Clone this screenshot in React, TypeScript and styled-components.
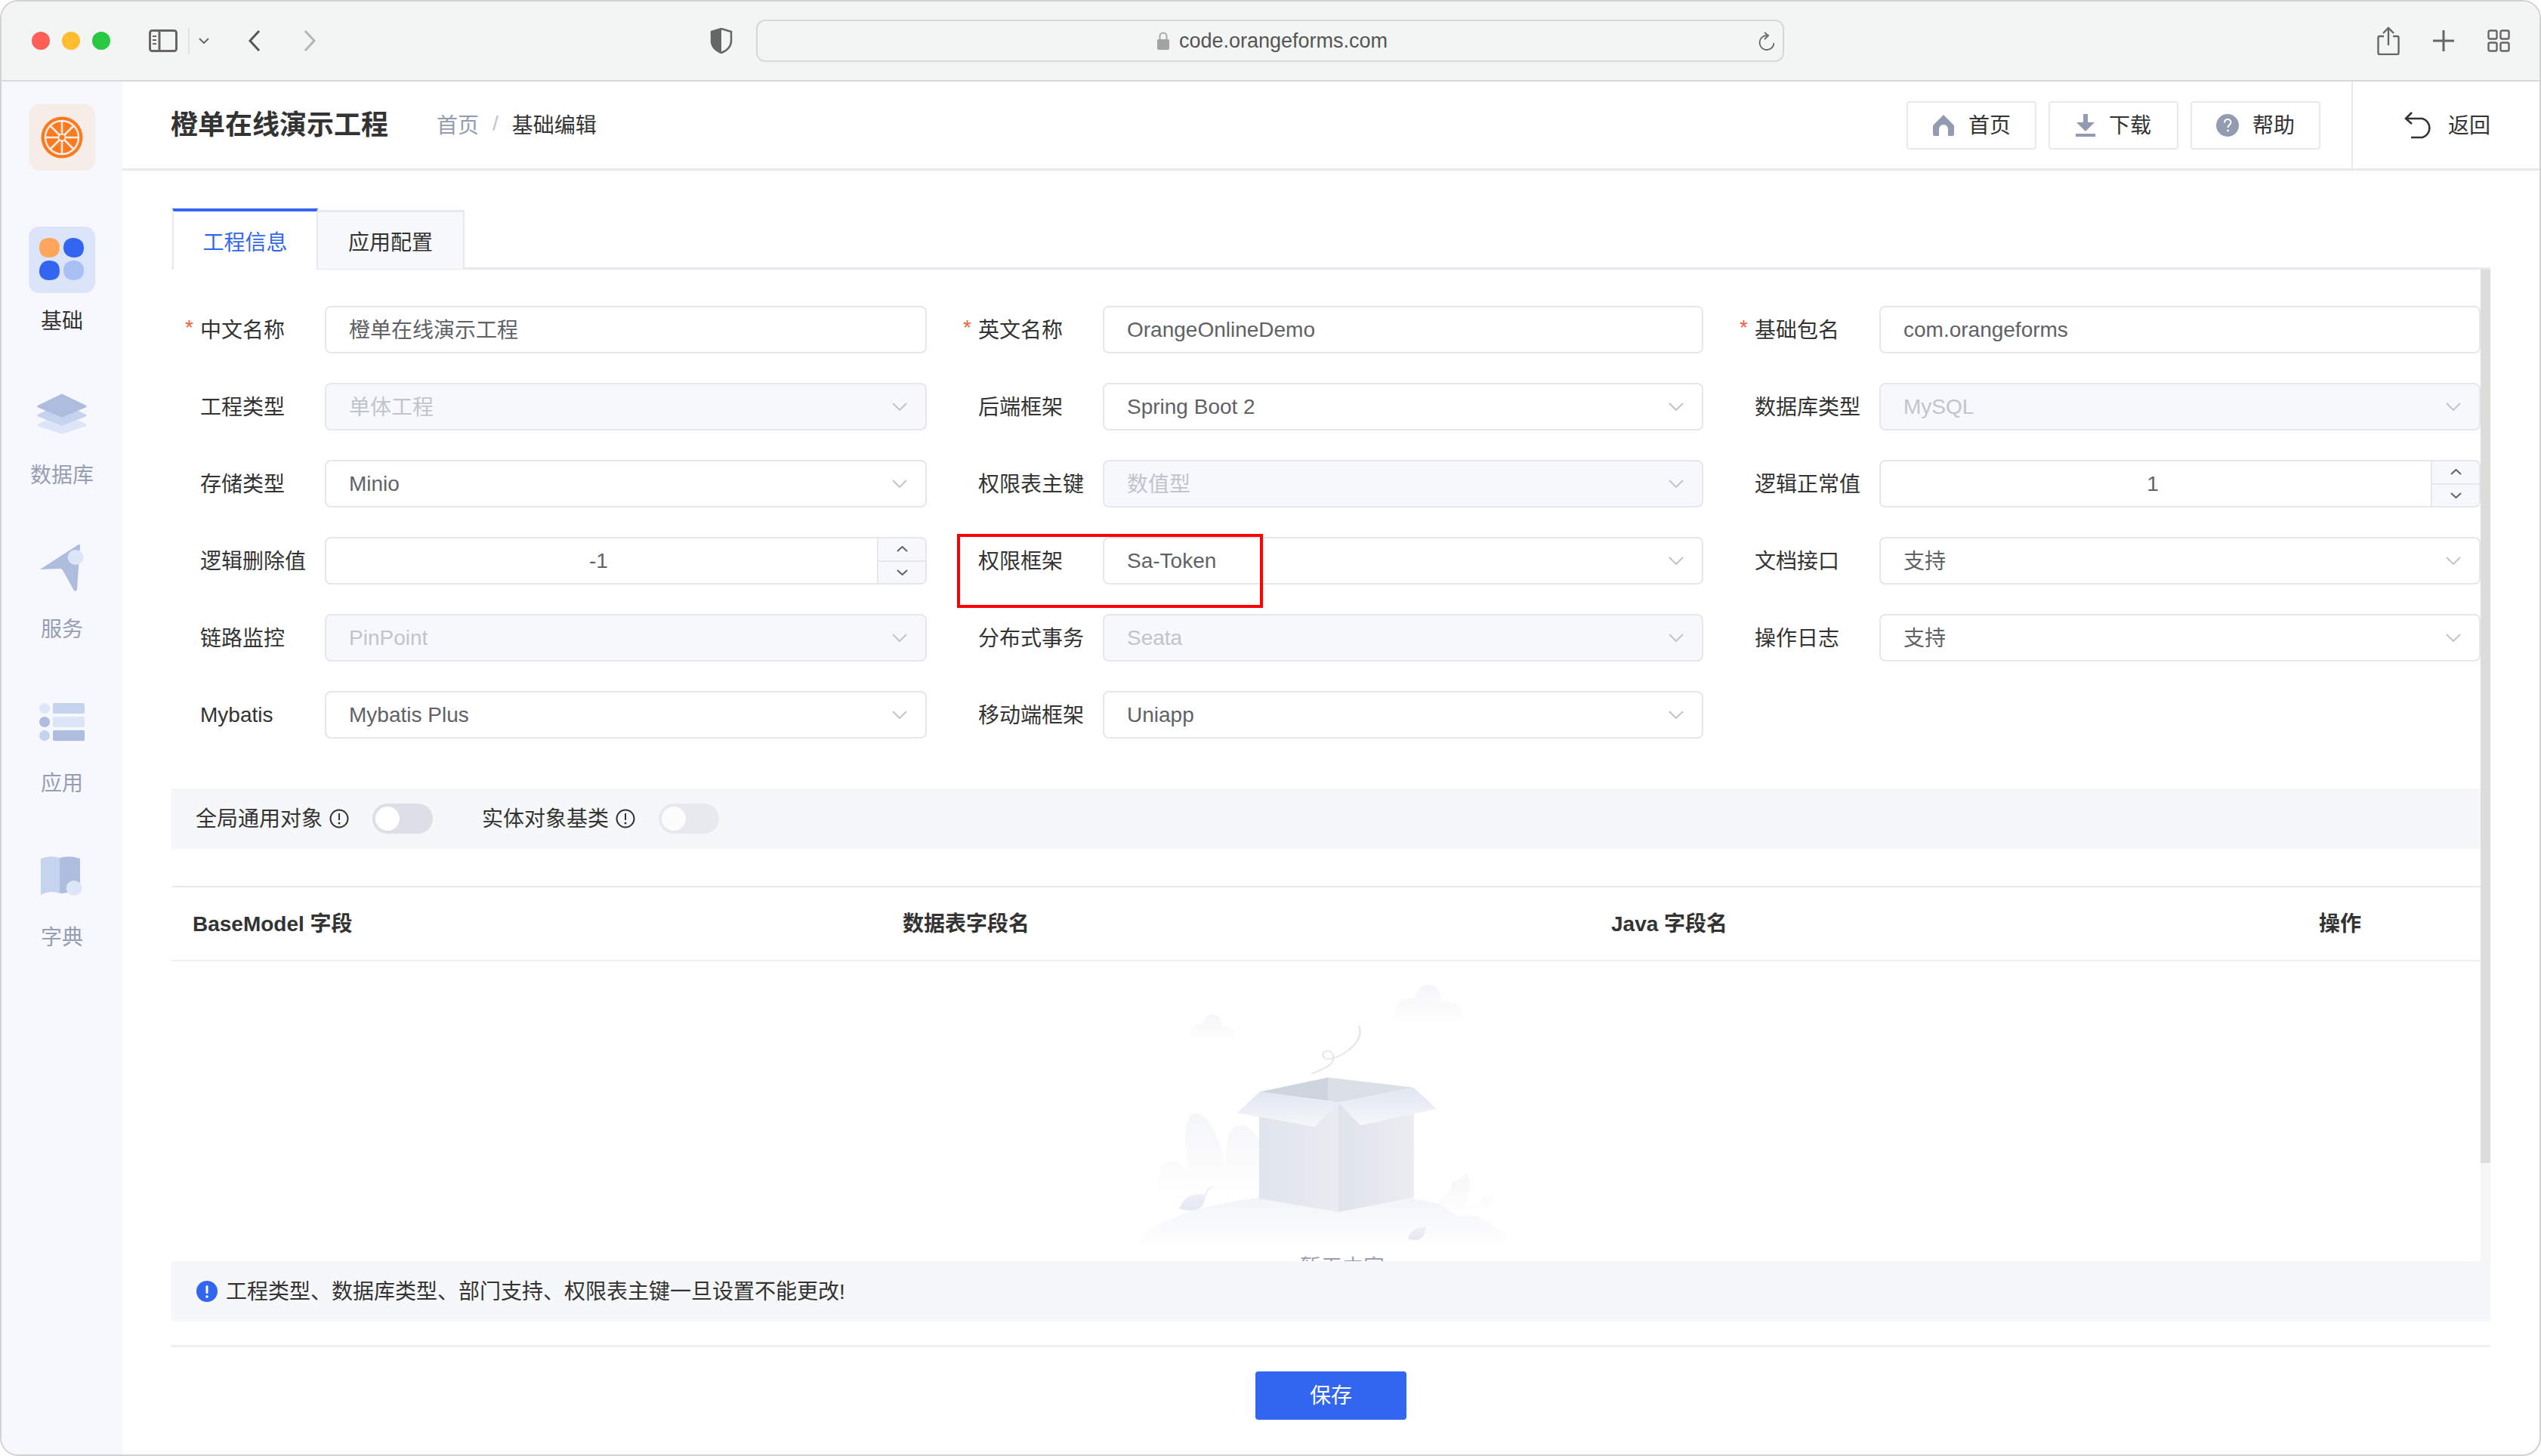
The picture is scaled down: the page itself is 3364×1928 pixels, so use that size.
import React from "react";
import styled, { createGlobalStyle } from "styled-components";

const GlobalStyle = createGlobalStyle`
  html, body {
    margin: 0;
    padding: 0;
    background: #fff;
  }
  body {
    font-family: "Liberation Sans", "Noto Sans CJK SC", sans-serif;
    font-size: 28px;
    color: #333;
  }
  * {
    box-sizing: border-box;
  }
`;

const Window = styled.div`
  width: 3364px;
  height: 1928px;
  border: 2px solid #d2d2d2;
  border-radius: 24px;
  overflow: hidden;
  display: flex;
  flex-direction: column;
  background: #fff;
`;

/* browser chrome */
const TitleBar = styled.div`
  height: 106px;
  flex: none;
  display: flex;
  align-items: center;
  background: #f3f5f4;
  border-bottom: 2px solid #d8d9d9;
  padding: 0 39px 0 40px;
`;
const Lights = styled.div`
  display: flex;
  gap: 16px;
`;
const Light = styled.span<{ $color: string }>`
  width: 24px;
  height: 24px;
  border-radius: 50%;
  background: ${(props) => props.$color};
`;
const PanelToggle = styled.div`
  margin-left: 51px;
  display: flex;
  align-items: center;
  gap: 12px;
`;
const ThinDivider = styled.span`
  width: 2px;
  height: 36px;
  background: #e2e3e3;
  margin-left: 2px;
`;
const NavArrows = styled.div`
  margin-left: 52px;
  display: flex;
  gap: 57px;
`;
const ShieldSlot = styled.div`
  margin-left: 522px;
  display: flex;
`;
const UrlBar = styled.div`
  position: relative;
  margin-left: 31px;
  width: 1361px;
  height: 56px;
  border: 2px solid #d6d8d7;
  border-radius: 12px;
  display: flex;
  align-items: center;
  justify-content: center;
  gap: 13px;
  padding-left: 6px;
  color: #555;
  font-size: 27px;
`;
const ReloadSlot = styled.span`
  position: absolute;
  right: 10px;
  top: 14px;
  display: flex;
`;
const ChromeTools = styled.div`
  margin-left: auto;
  display: flex;
  align-items: center;
  gap: 44px;
`;

const Body = styled.div`
  flex: 1;
  display: flex;
  min-height: 0;
`;

/* left rail */
const Rail = styled.nav`
  width: 160px;
  flex: none;
  background: #f6f8fd;
  padding: 30px 0 0 36px;
  display: flex;
  flex-direction: column;
`;
const LogoTile = styled.div`
  width: 88px;
  height: 88px;
  border-radius: 14px;
  background: #f6ede9;
  display: flex;
  align-items: center;
  justify-content: center;
  margin-bottom: 74px;
`;
const RailItem = styled.div`
  width: 88px;
  height: 204px;
  display: flex;
  flex-direction: column;
  align-items: center;
`;
const RailTile = styled.div<{ $active?: boolean }>`
  width: 88px;
  height: 88px;
  flex: none;
  border-radius: 14px;
  background: ${(props) => (props.$active ? "#dbe4f8" : "transparent")};
  display: flex;
  align-items: center;
  justify-content: center;
`;
const RailLabel = styled.span<{ $active?: boolean }>`
  margin-top: 18px;
  line-height: 40px;
  white-space: nowrap;
  color: ${(props) => (props.$active ? "#333" : "#979eb2")};
`;

const Main = styled.main`
  flex: 1;
  min-width: 0;
  display: flex;
  flex-direction: column;
`;

/* page header */
const Header = styled.header`
  height: 118px;
  flex: none;
  display: flex;
  align-items: center;
  border-bottom: 3px solid #e8e9ee;
  padding-left: 64px;
`;
const ProjectTitle = styled.h1`
  margin: 0;
  font-size: 36px;
  font-weight: 700;
  line-height: 50px;
  color: #333;
`;
const Breadcrumb = styled.div`
  margin-left: 64px;
  display: flex;
  align-items: center;
  padding-bottom: 4px;
`;
const CrumbLink = styled.span`
  color: #939bb0;
`;
const CrumbSep = styled.span`
  color: #c0c4cc;
  margin: 0 18px;
`;
const HeaderActions = styled.div`
  margin-left: auto;
  display: flex;
  gap: 16px;
`;
const ActionButton = styled.button`
  width: 172px;
  height: 64px;
  border: 2px solid #e8e9ee;
  border-radius: 4px;
  background: #fff;
  color: #333;
  font: inherit;
  padding: 0;
  display: flex;
  align-items: center;
  justify-content: center;
  gap: 18px;
`;
const LiftedText = styled.span`
  padding-bottom: 4px;
`;
const BackLink = styled.div`
  align-self: stretch;
  width: 249px;
  margin-left: 41px;
  border-left: 2px solid #e8e9ee;
  display: flex;
  align-items: center;
  gap: 18px;
  padding-left: 68px;
`;

/* page body */
const Content = styled.div`
  flex: 1;
  min-height: 0;
  display: flex;
  flex-direction: column;
  padding: 50px 65px 0 65px;
`;
const TabBar = styled.div`
  height: 81px;
  flex: none;
  display: flex;
  border-bottom: 3px solid #e8e9ee;
  padding-left: 1px;
`;
const Tab = styled.div<{ $active?: boolean }>`
  width: ${(props) => (props.$active ? "193px" : "194px")};
  height: ${(props) => (props.$active ? "81px" : "78px")};
  margin-top: ${(props) => (props.$active ? "0" : "2px")};
  display: flex;
  align-items: center;
  justify-content: center;
  background: ${(props) => (props.$active ? "#fff" : "#f7f8fb")};
  color: ${(props) => (props.$active ? "#3366f0" : "#333")};
  border-top: ${(props) =>
    props.$active ? "4px solid #3366f0" : "3px solid #e8e9ee"};
  border-left: ${(props) => (props.$active ? "2px solid #e8e9ee" : "none")};
  border-right: 2px solid #e8e9ee;
`;
const ScrollWrap = styled.div`
  height: 1313px;
  flex: none;
  display: flex;
`;
const ScrollBody = styled.div`
  flex: 1;
  min-width: 0;
  overflow: hidden;
  padding-top: 48px;
`;
const ScrollTrack = styled.div`
  width: 13px;
  flex: none;
  background: #f6f6f6;
`;
const ScrollThumb = styled.div`
  height: 1183px;
  background: #dcdcdc;
`;

const FormGrid = styled.div`
  display: grid;
  grid-template-columns: 1000px 998px 1fr;
  column-gap: 30px;
  row-gap: 39px;
`;
const FormItem = styled.div`
  position: relative;
  height: 63px;
  display: flex;
  align-items: center;
`;
const FieldLabel = styled.label<{ $required?: boolean; $lift?: boolean }>`
  position: relative;
  width: 203px;
  flex: none;
  padding-left: 38px;
  padding-bottom: ${(props) => (props.$lift ? "4px" : "0")};
  white-space: nowrap;
  color: #333;
  &::before {
    content: ${(props) => (props.$required ? '"*"' : "none")};
    position: absolute;
    left: 18px;
    top: 3px;
    color: #f4603a;
  }
`;
const Field = styled.div<{ $disabled?: boolean }>`
  position: relative;
  flex: 1;
  height: 63px;
  display: flex;
  align-items: center;
  padding: 0 30px;
  border: 2px solid #e6e7ec;
  border-radius: 8px;
  background: ${(props) => (props.$disabled ? "#f7f8fc" : "#fff")};
  color: ${(props) => (props.$disabled ? "#c0c4cc" : "#606266")};
`;
const FieldText = styled.span<{ $lift?: boolean }>`
  padding-bottom: ${(props) => (props.$lift ? "4px" : "0")};
`;
const CaretSlot = styled.span`
  position: absolute;
  right: 24px;
  top: 24px;
  display: flex;
`;
const NumberValue = styled.span`
  flex: 1;
  text-align: center;
  padding-right: 72px;
`;
const Spinner = styled.div`
  position: absolute;
  top: 0;
  right: 0;
  bottom: 0;
  width: 64px;
  display: flex;
  flex-direction: column;
  border-left: 2px solid #e6e7ec;
  background: #f7f8fc;
  border-radius: 0 6px 6px 0;
`;
const SpinnerStep = styled.span<{ $down?: boolean }>`
  flex: 1;
  display: flex;
  align-items: center;
  justify-content: center;
  border-top: ${(props) => (props.$down ? "2px solid #e6e7ec" : "none")};
`;
const Callout = styled.div`
  position: absolute;
  left: 10px;
  top: -4px;
  width: 405px;
  height: 98px;
  border: 4px solid #f00;
  pointer-events: none;
`;

const SwitchStrip = styled.div`
  margin-top: 66px;
  height: 80px;
  background: #f6f7f9;
  display: flex;
  align-items: center;
  padding-left: 32px;
`;
const SwitchLabel = styled.span`
  white-space: nowrap;
  color: #333;
  padding-bottom: 4px;
`;
const InfoSlot = styled.span`
  margin-left: 9px;
  display: flex;
`;
const Switch = styled.span<{ $disabled?: boolean }>`
  position: relative;
  margin-left: 31px;
  margin-right: 65px;
  width: 80px;
  height: 40px;
  border-radius: 20px;
  background: ${(props) => (props.$disabled ? "#e8e9ee" : "#dcdfe6")};
  &::after {
    content: "";
    position: absolute;
    left: 4px;
    top: 4px;
    width: 32px;
    height: 32px;
    border-radius: 50%;
    background: ${(props) => (props.$disabled ? "#fcfcfd" : "#fff")};
  }
`;

const TableHead = styled.div`
  margin-top: 49px;
  height: 100px;
  display: grid;
  grid-template-columns: 940px 938px 937px 1fr;
  align-items: center;
  border-top: 2px solid #e8e9ee;
  border-bottom: 2px solid #ebeef5;
`;
const HeadCell = styled.div`
  padding: 0 0 5px 28px;
  font-weight: 700;
  white-space: nowrap;
  color: #333;
`;
const EmptyState = styled.div`
  display: flex;
  flex-direction: column;
  align-items: center;
  padding: 8px 0 0 43px;
`;
const EmptyText = styled.div`
  line-height: 40px;
  color: #979eb2;
`;

const Notice = styled.div`
  height: 80px;
  flex: none;
  background: #f6f7f9;
  display: flex;
  align-items: center;
  gap: 11px;
  padding-left: 33px;
  color: #333;
`;
const Footer = styled.div`
  margin-top: 31px;
  flex: none;
  border-top: 3px solid #eeeeee;
  padding-top: 32px;
  display: flex;
  justify-content: center;
`;
const SaveButton = styled.button`
  width: 200px;
  height: 64px;
  border: none;
  border-radius: 4px;
  background: #3366f0;
  color: #fff;
  font: inherit;
  padding: 0 0 4px;
`;

type FieldDef = {
  label: string;
  value: string;
  kind?: "text" | "select" | "number";
  required?: boolean;
  disabled?: boolean;
  marked?: boolean;
};

const fields: FieldDef[] = [
  { label: "中文名称", value: "橙单在线演示工程", required: true },
  { label: "英文名称", value: "OrangeOnlineDemo", required: true },
  { label: "基础包名", value: "com.orangeforms", required: true },
  { label: "工程类型", value: "单体工程", kind: "select", disabled: true },
  { label: "后端框架", value: "Spring Boot 2", kind: "select" },
  { label: "数据库类型", value: "MySQL", kind: "select", disabled: true },
  { label: "存储类型", value: "Minio", kind: "select" },
  { label: "权限表主键", value: "数值型", kind: "select", disabled: true },
  { label: "逻辑正常值", value: "1", kind: "number" },
  { label: "逻辑删除值", value: "-1", kind: "number" },
  { label: "权限框架", value: "Sa-Token", kind: "select", marked: true },
  { label: "文档接口", value: "支持", kind: "select" },
  { label: "链路监控", value: "PinPoint", kind: "select", disabled: true },
  { label: "分布式事务", value: "Seata", kind: "select", disabled: true },
  { label: "操作日志", value: "支持", kind: "select" },
  { label: "Mybatis", value: "Mybatis Plus", kind: "select" },
  { label: "移动端框架", value: "Uniapp", kind: "select" },
];

// CJK glyphs sit a little low next to the latin baseline, so they get lifted
const hasCjk = (text: string) => /[\u4e00-\u9fff]/.test(text);

const Chevron = ({
  up,
  width,
  height,
  color,
}: {
  up?: boolean;
  width: number;
  height: number;
  color: string;
}) => (
  <svg width={width} height={height} viewBox={`0 0 ${width} ${height}`} fill="none">
    <polyline
      points={
        up
          ? `1,${height - 1} ${width / 2},1 ${width - 1},${height - 1}`
          : `1,1 ${width / 2},${height - 1} ${width - 1},1`
      }
      stroke={color}
      strokeWidth="2"
    />
  </svg>
);

const InfoIcon = () => (
  <svg width="26" height="26" viewBox="0 0 26 26" fill="none">
    <circle cx="13" cy="13" r="11.5" stroke="#333" strokeWidth="2" />
    <line x1="13" y1="6" x2="13" y2="15" stroke="#333" strokeWidth="2" />
    <circle cx="13" cy="19" r="1.5" fill="#333" />
  </svg>
);

const OrangeLogo = () => (
  <svg width="56" height="56" viewBox="0 0 56 56">
    <circle cx="28" cy="28" r="27.5" fill="#ff7a1f" />
    <circle cx="28" cy="28" r="22" fill="none" stroke="#f6ede9" strokeWidth="2.5" />
    <g stroke="#f6ede9" strokeWidth="2.5">
      <line x1="28" y1="6" x2="28" y2="50" />
      <line x1="6" y1="28" x2="50" y2="28" />
      <line x1="12.5" y1="12.5" x2="43.5" y2="43.5" />
      <line x1="43.5" y1="12.5" x2="12.5" y2="43.5" />
    </g>
    <circle cx="28" cy="28" r="5.5" fill="#f6ede9" />
    <circle cx="28" cy="28" r="3.5" fill="#ff7a1f" />
  </svg>
);

const BasicIcon = () => (
  <svg width="60" height="58" viewBox="0 0 60 58">
    <path d="M0 13 C0 3 6 0 13 0 C22 0 27 4 27 13 C27 21 22 26 13 26 C5 26 0 22 0 13 Z" fill="#ffa65c" />
    <path d="M32 13 C32 5 37 0 45 0 C53 0 59 5 59 13 C59 22 54 26 46 26 C38 26 32 21 32 13 Z" fill="#3366f0" />
    <path d="M0 44 C0 36 5 30 13 30 C21 30 27 33 27 44 C27 53 21 56 13 56 C5 56 0 52 0 44 Z" fill="#3366f0" />
    <path d="M32 43 C32 34 38 30 46 30 C54 30 59 35 59 43 C59 51 54 56 46 56 C38 56 32 52 32 43 Z" fill="#a9c0f5" />
  </svg>
);

const DatabaseIcon = () => (
  <svg width="66" height="54" viewBox="0 0 66 54">
    <g strokeLinejoin="round" strokeWidth="3">
      <polygon points="33,26 64,42 33,52 2,42" fill="#dde5f8" stroke="#dde5f8" />
      <polygon points="33,14 64,29 33,41 2,29" fill="#c6d3ee" stroke="#c6d3ee" />
      <polygon points="33,2 64,17 33,30 2,17" fill="#aebcdd" stroke="#aebcdd" />
    </g>
  </svg>
);

const ServiceIcon = () => (
  <svg width="60" height="64" viewBox="0 0 60 64">
    <path
      d="M1 34 L52 1 Q54 0 54 3 L50 60 Q49 64 46 62 L31 35 Q30 33 28 33 Z"
      fill="#aebcdd"
    />
    <ellipse cx="48" cy="18" rx="10.5" ry="10" fill="#dde5f8" />
  </svg>
);

const AppIcon = () => (
  <svg width="60" height="50" viewBox="0 0 60 50">
    <ellipse cx="7" cy="7" rx="7" ry="7" fill="#dde5f8" />
    <ellipse cx="7" cy="25" rx="7" ry="7" fill="#aebcdd" />
    <ellipse cx="7" cy="43" rx="7" ry="7" fill="#c6d3ee" />
    <rect x="18" y="0" width="42" height="14" rx="2" fill="#c6d3ee" />
    <rect x="18" y="18" width="42" height="14" rx="2" fill="#dde5f8" />
    <rect x="18" y="36" width="42" height="14" rx="2" fill="#aebcdd" />
  </svg>
);

const DictIcon = () => (
  <svg width="56" height="54" viewBox="0 0 56 54">
    <path d="M0 4 Q13 -1 25 3 V50 Q13 45 0 52 Z" fill="#c6d3ee" />
    <path d="M25 3 Q38 -1 52 4 V46 L28 50 Q25 50 25 48 Z" fill="#aebcdd" />
    <ellipse cx="44" cy="43" rx="10.5" ry="10" fill="#dde5f8" />
  </svg>
);

const HomeIcon = () => (
  <svg width="30" height="28" viewBox="0 0 30 28">
    <path
      d="M15 0 L28 13 Q29 14 29 16 V26 Q29 28 27 28 H21 V19 A6 6 0 0 0 9 19 V28 H3 Q1 28 1 26 V16 Q1 14 2 13 Z"
      fill="#939bb0"
    />
  </svg>
);

const DownloadIcon = () => (
  <svg width="26" height="30" viewBox="0 0 26 30">
    <rect x="10" y="0" width="6" height="12" fill="#939bb0" />
    <polygon points="1,11 25,11 13,23" fill="#939bb0" />
    <rect x="0" y="26" width="26" height="4" fill="#939bb0" />
  </svg>
);

const HelpIcon = () => (
  <svg width="30" height="30" viewBox="0 0 30 30" fill="none">
    <circle cx="15" cy="15" r="15" fill="#939bb0" />
    <path
      d="M11 11.5 C11 8.5 13 7 15.3 7 C17.8 7 19.5 8.8 19.5 11 C19.5 14 15.5 14.5 15.5 18"
      stroke="#fff"
      strokeWidth="2"
    />
    <circle cx="15.5" cy="22" r="1.4" fill="#fff" />
  </svg>
);

const ReturnIcon = () => (
  <svg width="40" height="36" viewBox="0 0 40 36" fill="none">
    <polyline points="10,1 2,9 10,16" stroke="#333" strokeWidth="2.6" />
    <path d="M2 9 H24 A13 13 0 0 1 24 34 H9" stroke="#333" strokeWidth="2.6" />
  </svg>
);

const EmptyIllustration = () => (
  <svg width="754" height="378" viewBox="0 0 1689 1134" preserveAspectRatio="none">
    <defs>
      <linearGradient id="ground" x1="0" y1="0" x2="0" y2="1">
        <stop offset="0" stopColor="#f2f4f8" />
        <stop offset="1" stopColor="#ffffff" />
      </linearGradient>
      <linearGradient id="soft" x1="0" y1="0" x2="0" y2="1">
        <stop offset="0" stopColor="#f5f6f8" />
        <stop offset="1" stopColor="#ffffff" />
      </linearGradient>
      <linearGradient id="flap" x1="0" y1="0" x2="0" y2="1">
        <stop offset="0" stopColor="#e1e6f2" />
        <stop offset="1" stopColor="#f6f7f9" />
      </linearGradient>
      <linearGradient id="faceLeft" x1="0" y1="0" x2="1" y2="0">
        <stop offset="0" stopColor="#e0e4ec" />
        <stop offset="1" stopColor="#e9ecf1" />
      </linearGradient>
      <linearGradient id="faceRight" x1="0" y1="0" x2="1" y2="0">
        <stop offset="0" stopColor="#dfe3eb" />
        <stop offset="1" stopColor="#ebedf1" />
      </linearGradient>
      <linearGradient id="leaf" x1="0" y1="0" x2="0" y2="1">
        <stop offset="0" stopColor="#f4f5f8" />
        <stop offset="1" stopColor="#e3e7f2" />
      </linearGradient>
    </defs>
    <path d="M392 262 C392 235 410 220 432 224 C434 200 446 185 460 185 C478 185 490 205 488 235 C510 230 528 245 528 270 C528 285 520 300 510 300 H410 C398 296 392 280 392 262 Z" fill="url(#soft)" />
    <path d="M998 185 C998 145 1020 118 1060 124 C1062 90 1080 68 1100 68 C1125 68 1142 95 1138 138 C1170 128 1200 150 1200 190 C1200 220 1185 240 1165 242 H1030 C1010 238 998 215 998 185 Z" fill="url(#soft)" />
    <path d="M300 930 C296 850 300 768 336 768 C360 768 380 800 392 826 C375 720 370 580 410 580 C450 580 485 690 498 780 C498 700 505 626 544 626 C565 626 590 660 600 700 V920 L400 930 Z" fill="url(#soft)" />
    <path d="M235 1110 C250 1020 420 940 600 915 H1040 C1200 950 1330 1020 1350 1110 Z" fill="url(#ground)" />
    <path d="M1130 940 C1140 910 1165 905 1170 850 C1195 845 1208 830 1213 815 C1228 860 1225 880 1215 910 L1210 960 C1235 945 1250 940 1262 912 L1295 910 C1295 945 1275 955 1262 985 L1190 990 Z" fill="url(#soft)" />
    <path d="M362 958 C370 925 390 900 420 900 C432 900 436 905 436 905 C440 885 450 870 468 862 C450 880 442 900 436 930 C430 965 395 975 362 958 Z" fill="url(#leaf)" />
    <path d="M1040 1078 C1045 1050 1060 1034 1090 1030 L1096 1012 L1090 1050 C1085 1085 1060 1088 1040 1078 Z" fill="url(#leaf)" />
    <polygon points="598,590 833,540 833,972 598,918" fill="url(#faceLeft)" />
    <polygon points="833,540 1057,580 1057,914 833,972" fill="url(#faceRight)" />
    <polygon points="600,494 802,437 802,530" fill="#cfd5df" />
    <polygon points="802,437 1056,477 832,537 802,530" fill="#dbdfe6" />
    <polygon points="600,494 832,537 762,633 533,578" fill="url(#flap)" />
    <polygon points="832,537 1056,477 1124,562 899,628" fill="url(#flap)" />
    <path
      d="M754 422 C800 400 822 382 818 350 C812 322 785 330 787 350 C792 378 832 360 862 330 C895 296 903 265 894 232"
      fill="none"
      stroke="#e1e6ee"
      strokeWidth="5"
    />
  </svg>
);

export default function App() {
  return (
    <>
      <GlobalStyle />
      <Window>
        <TitleBar>
          <Lights>
            <Light $color="#ff5f57" />
            <Light $color="#febc2e" />
            <Light $color="#28c840" />
          </Lights>
          <PanelToggle>
            <svg width="38" height="30" viewBox="0 0 38 30" fill="none">
              <rect x="1.5" y="1.5" width="35" height="27" rx="3" stroke="#666" strokeWidth="3" />
              <line x1="14" y1="2" x2="14" y2="28" stroke="#666" strokeWidth="3" />
              <line x1="5" y1="9" x2="10" y2="9" stroke="#666" strokeWidth="2" />
              <line x1="5" y1="14" x2="10" y2="14" stroke="#666" strokeWidth="2" />
              <line x1="5" y1="19" x2="10" y2="19" stroke="#666" strokeWidth="2" />
            </svg>
            <ThinDivider />
            <svg width="14" height="8" viewBox="0 0 14 8" fill="none">
              <polyline points="1,1 7,7 13,1" stroke="#666" strokeWidth="2" />
            </svg>
          </PanelToggle>
          <NavArrows>
            <svg width="16" height="28" viewBox="0 0 16 28" fill="none">
              <polyline points="14,1 2,14 14,27" stroke="#555" strokeWidth="3" />
            </svg>
            <svg width="16" height="28" viewBox="0 0 16 28" fill="none">
              <polyline points="2,1 14,14 2,27" stroke="#b4b4b4" strokeWidth="3" />
            </svg>
          </NavArrows>
          <ShieldSlot>
            <svg width="30" height="34" viewBox="0 0 30 34" fill="none">
              <path d="M15 1 L28 5 V17 C28 25 22 30 15 33 C8 30 2 25 2 17 V5 Z" stroke="#666" strokeWidth="2.5" />
              <path d="M15 1 L2 5 V17 C2 25 8 30 15 33 Z" fill="#666" />
            </svg>
          </ShieldSlot>
          <UrlBar>
            <svg width="16" height="24" viewBox="0 0 16 24" fill="none">
              <path d="M3.5 11 V6 A4.5 4.5 0 0 1 12.5 6 V11" stroke="#aaa" strokeWidth="2" />
              <rect x="0" y="10" width="16" height="14" rx="2" fill="#a2a2a2" />
            </svg>
            <span>code.orangeforms.com</span>
            <ReloadSlot>
              <svg width="22" height="26" viewBox="0 0 22 26" fill="none">
                <path d="M11 5 A9.5 9.5 0 1 0 20.5 15" stroke="#666" strokeWidth="1.8" />
                <polyline points="8,1 13,5 8,10" stroke="#666" strokeWidth="1.8" />
              </svg>
            </ReloadSlot>
          </UrlBar>
          <ChromeTools>
            <svg width="30" height="38" viewBox="0 0 30 38" fill="none">
              <path d="M9 13 H3 Q1.5 13 1.5 15 V35 Q1.5 37 3 37 H27 Q28.5 37 28.5 35 V15 Q28.5 13 27 13 H21" stroke="#666" strokeWidth="2.4" />
              <line x1="15" y1="2" x2="15" y2="25" stroke="#666" strokeWidth="2.4" />
              <polyline points="8,9 15,2 22,9" stroke="#666" strokeWidth="2.4" />
            </svg>
            <svg width="28" height="28" viewBox="0 0 28 28" fill="none">
              <line x1="14" y1="0" x2="14" y2="28" stroke="#666" strokeWidth="3" />
              <line x1="0" y1="14" x2="28" y2="14" stroke="#666" strokeWidth="3" />
            </svg>
            <svg width="30" height="30" viewBox="0 0 30 30" fill="none">
              <rect x="1.5" y="1.5" width="11" height="11" rx="2" stroke="#666" strokeWidth="2.4" />
              <rect x="17.5" y="1.5" width="11" height="11" rx="2" stroke="#666" strokeWidth="2.4" />
              <rect x="1.5" y="17.5" width="11" height="11" rx="2" stroke="#666" strokeWidth="2.4" />
              <rect x="17.5" y="17.5" width="11" height="11" rx="2" stroke="#666" strokeWidth="2.4" />
            </svg>
          </ChromeTools>
        </TitleBar>
        <Body>
          <Rail>
            <LogoTile>
              <OrangeLogo />
            </LogoTile>
            <RailItem>
              <RailTile $active>
                <BasicIcon />
              </RailTile>
              <RailLabel $active>基础</RailLabel>
            </RailItem>
            <RailItem>
              <RailTile>
                <DatabaseIcon />
              </RailTile>
              <RailLabel>数据库</RailLabel>
            </RailItem>
            <RailItem>
              <RailTile>
                <ServiceIcon />
              </RailTile>
              <RailLabel>服务</RailLabel>
            </RailItem>
            <RailItem>
              <RailTile>
                <AppIcon />
              </RailTile>
              <RailLabel>应用</RailLabel>
            </RailItem>
            <RailItem>
              <RailTile>
                <DictIcon />
              </RailTile>
              <RailLabel>字典</RailLabel>
            </RailItem>
          </Rail>
          <Main>
            <Header>
              <ProjectTitle>橙单在线演示工程</ProjectTitle>
              <Breadcrumb>
                <CrumbLink>首页</CrumbLink>
                <CrumbSep>/</CrumbSep>
                <span>基础编辑</span>
              </Breadcrumb>
              <HeaderActions>
                <ActionButton>
                  <HomeIcon />
                  <LiftedText>首页</LiftedText>
                </ActionButton>
                <ActionButton>
                  <DownloadIcon />
                  <LiftedText>下载</LiftedText>
                </ActionButton>
                <ActionButton>
                  <HelpIcon />
                  <LiftedText>帮助</LiftedText>
                </ActionButton>
              </HeaderActions>
              <BackLink>
                <ReturnIcon />
                <LiftedText>返回</LiftedText>
              </BackLink>
            </Header>
            <Content>
              <TabBar>
                <Tab $active>工程信息</Tab>
                <Tab>应用配置</Tab>
              </TabBar>
              <ScrollWrap>
                <ScrollBody>
                  <FormGrid>
                    {fields.map((f) => (
                      <FormItem key={f.label}>
                        <FieldLabel $required={f.required} $lift={hasCjk(f.label)}>
                          {f.label}
                        </FieldLabel>
                        <Field $disabled={f.disabled}>
                          {f.kind === "number" ? (
                            <>
                              <NumberValue>{f.value}</NumberValue>
                              <Spinner>
                                <SpinnerStep>
                                  <Chevron up width={15} height={8} color="#606266" />
                                </SpinnerStep>
                                <SpinnerStep $down>
                                  <Chevron width={15} height={8} color="#606266" />
                                </SpinnerStep>
                              </Spinner>
                            </>
                          ) : (
                            <FieldText $lift={hasCjk(f.value)}>{f.value}</FieldText>
                          )}
                          {f.kind === "select" && (
                            <CaretSlot>
                              <Chevron width={20} height={11} color="#c0c4cc" />
                            </CaretSlot>
                          )}
                        </Field>
                        {f.marked && <Callout />}
                      </FormItem>
                    ))}
                  </FormGrid>
                  <SwitchStrip>
                    <SwitchLabel>全局通用对象</SwitchLabel>
                    <InfoSlot>
                      <InfoIcon />
                    </InfoSlot>
                    <Switch />
                    <SwitchLabel>实体对象基类</SwitchLabel>
                    <InfoSlot>
                      <InfoIcon />
                    </InfoSlot>
                    <Switch $disabled />
                  </SwitchStrip>
                  <TableHead>
                    <HeadCell>BaseModel 字段</HeadCell>
                    <HeadCell>数据表字段名</HeadCell>
                    <HeadCell>Java 字段名</HeadCell>
                    <HeadCell>操作</HeadCell>
                  </TableHead>
                  <EmptyState>
                    <EmptyIllustration />
                    <EmptyText>暂无内容</EmptyText>
                  </EmptyState>
                </ScrollBody>
                <ScrollTrack>
                  <ScrollThumb />
                </ScrollTrack>
              </ScrollWrap>
              <Notice>
                <svg width="28" height="28" viewBox="0 0 28 28">
                  <circle cx="14" cy="14" r="14" fill="#3366f0" />
                  <rect x="12.5" y="6" width="3" height="11" rx="1.5" fill="#fff" />
                  <circle cx="14" cy="21" r="1.8" fill="#fff" />
                </svg>
                <LiftedText>工程类型、数据库类型、部门支持、权限表主键一旦设置不能更改!</LiftedText>
              </Notice>
              <Footer>
                <SaveButton>保存</SaveButton>
              </Footer>
            </Content>
          </Main>
        </Body>
      </Window>
    </>
  );
}
